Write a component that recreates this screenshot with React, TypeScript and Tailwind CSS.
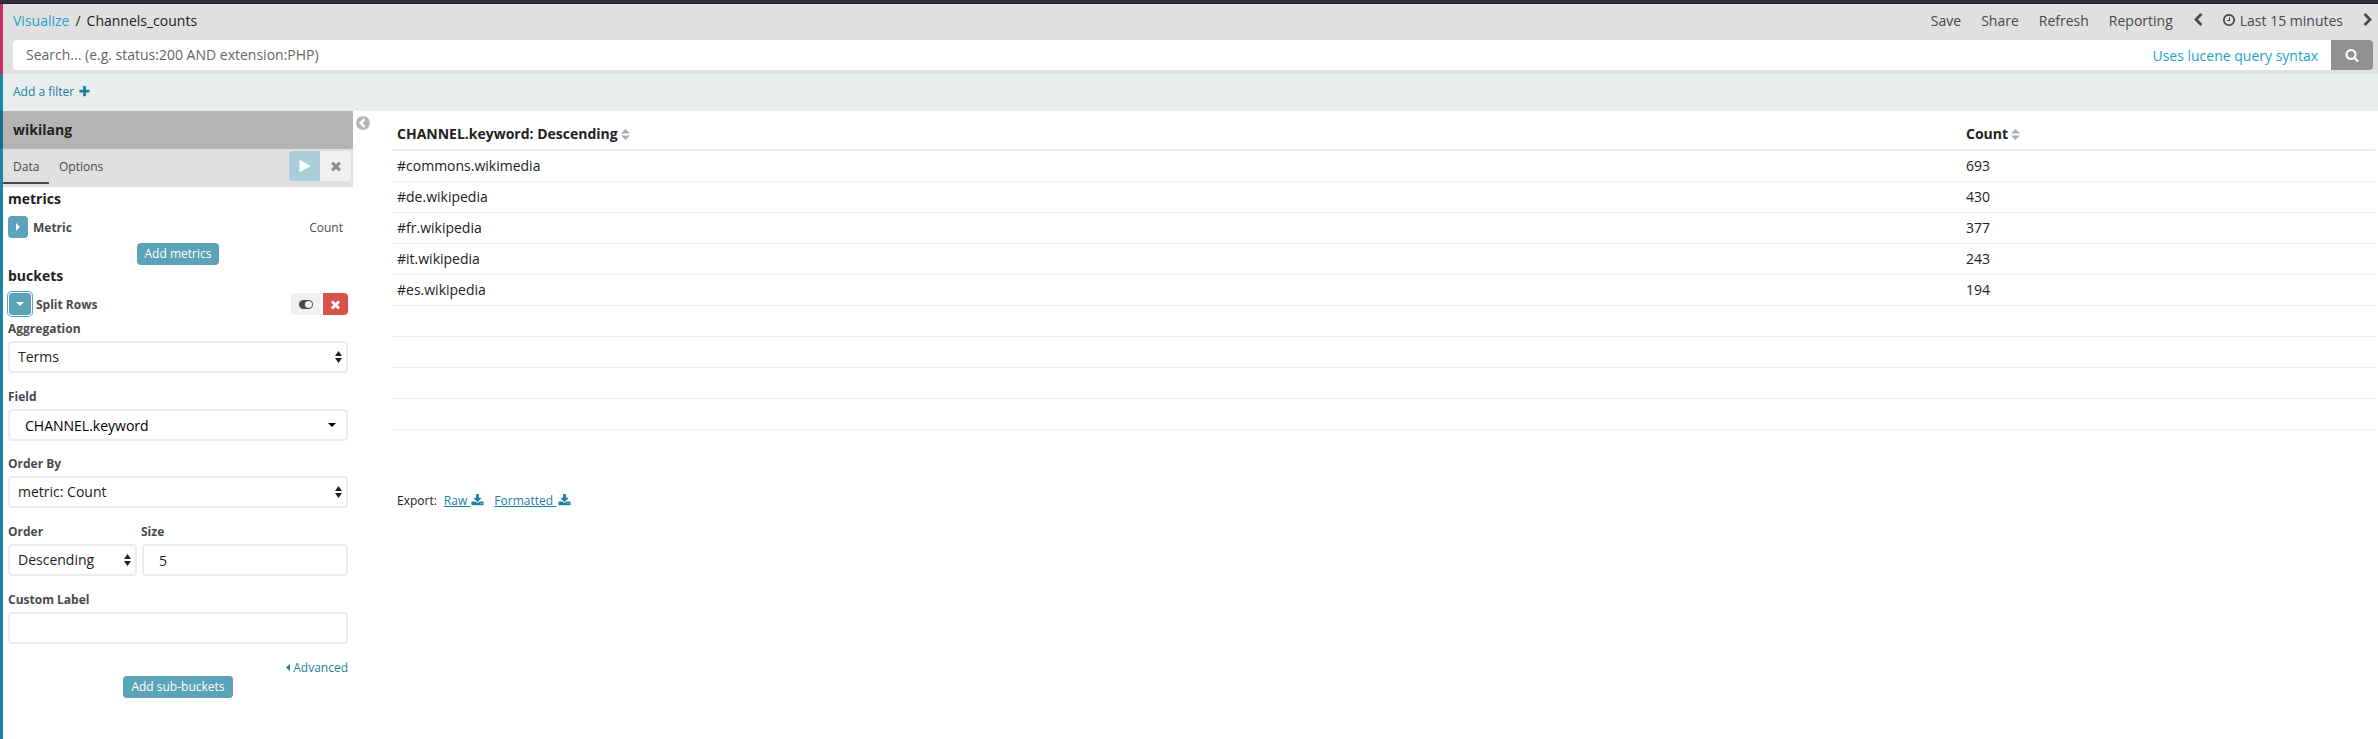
import React from "react";

const FA = {
  plus: "M1600 736v192q0 40-28 68t-68 28h-416v416q0 40-28 68t-68 28h-192q-40 0-68-28t-28-68v-416h-416q-40 0-68-28t-28-68v-192q0-40 28-68t68-28h416v-416q0-40 28-68t68-28h192q40 0 68 28t28 68v416h416q40 0 68 28t28 68z",
  times: "M1490 1322q0 40-28 68l-136 136q-28 28-68 28t-68-28l-294-294-294 294q-28 28-68 28t-68-28l-136-136q-28-28-28-68t28-68l294-294-294-294q-28-28-28-68t28-68l136-136q28-28 68-28t68 28l294 294 294-294q28-28 68-28t68 28l136 136q28 28 28 68t-28 68l-294 294 294 294q28 28 28 68z",
  play: "M1576 927l-1328 738q-23 13-39.5 3t-16.5-36v-1472q0-26 16.5-36t39.5 3l1328 738q23 13 23 31t-23 31z",
  left: "M1427 301l-531 531 531 531q19 19 19 45t-19 45l-166 166q-19 19-45 19t-45-19l-742-742q-19-19-19-45t19-45l742-742q19-19 45-19t45 19l166 166q19 19 19 45t-19 45z",
  right: "M1363 877l-742 742q-19 19-45 19t-45-19l-166-166q-19-19-19-45t19-45l531-531-531-531q-19-19-19-45t19-45l166-166q19-19 45-19t45 19l742 742q19 19 19 45t-19 45z",
  clock: "M1024 544v448q0 14-9 23t-23 9h-320q-14 0-23-9t-9-23v-64q0-14 9-23t23-9h224v-352q0-14 9-23t23-9h64q14 0 23 9t9 23zm416 352q0-148-73-273t-198-198-273-73-273 73-198 198-73 273 73 273 198 198 273 73 273-73 198-198 73-273zm224 0q0 209-103 385.5t-279.5 279.5-385.5 103-385.5-103-279.5-279.5-103-385.5 103-385.5 279.5-279.5 385.5-103 385.5 103 279.5 279.5 103 385.5z",
  search: "M1216 832q0-185-131.5-316.5t-316.5-131.5-316.5 131.5-131.5 316.5 131.5 316.5 316.5 131.5 316.5-131.5 131.5-316.5zm512 832q0 52-38 90t-90 38q-54 0-90-38l-343-342q-179 124-399 124-143 0-273.5-55.5t-225-150-150-225-55.5-273.5 55.5-273.5 150-225 225-150 273.5-55.5 273.5 55.5 225 150 150 225 55.5 273.5q0 220-124 399l343 343q37 37 37 90z",
  download: "M1344 1344q0-26-19-45t-45-19-45 19-19 45 19 45 45 19 45-19 19-45zm256 0q0-26-19-45t-45-19-45 19-19 45 19 45 45 19 45-19 19-45zm128-224v320q0 40-28 68t-68 28h-1472q-40 0-68-28t-28-68v-320q0-40 28-68t68-28h465l135 136q58 56 136 56t136-56l136-136h464q40 0 68 28t28 68zm-325-569q17 41-14 70l-448 448q-18 19-45 19t-45-19l-448-448q-31-29-14-70 17-39 59-39h256v-448q0-26 19-45t45-19h256q26 0 45 19t19 45v448h256q42 0 59 39z",
  circleLeft: "M1037 1395l102-102q19-19 19-45t-19-45l-307-307 307-307q19-19 19-45t-19-45l-102-102q-19-19-45-19t-45 19l-454 454q-19 19-19 45t19 45l454 454q19 19 45 19t45-19zm627-499q0 209-103 385.5t-279.5 279.5-385.5 103-385.5-103-279.5-279.5-103-385.5 103-385.5 279.5-279.5 385.5-103 385.5 103 279.5 279.5 103 385.5z",
};

function Icon({ name, className = "size-3.5" }: { name: keyof typeof FA; className?: string }) {
  return (
    <svg viewBox="0 0 1792 1792" fill="currentColor" className={`shrink-0 overflow-visible ${className}`}>
      <path d={FA[name]} />
    </svg>
  );
}

function UpDown({ className }: { className: string }) {
  return (
    <svg viewBox="0 0 8 12" preserveAspectRatio="none" fill="currentColor" className={`shrink-0 ${className}`}>
      <path d="M4 0L8 5H0zM4 12L0 7H8z" />
    </svg>
  );
}

function Label({ children, className = "" }: { children: React.ReactNode; className?: string }) {
  return <div className={`h-[21px] text-xs leading-[18px] font-bold text-[#4a4a4a] ${className}`}>{children}</div>;
}

function Select({ value, className = "w-[340px]" }: { value: string; className?: string }) {
  return (
    <div className={`flex h-8 items-center justify-between rounded border-2 border-[#e8eeee] pr-1 pl-2 text-sm text-[#222] ${className}`}>
      <span>{value}</span>
      <UpDown className="h-3 w-[7px]" />
    </div>
  );
}

const rows: [string, string][] = [
  ["#commons.wikimedia", "693"],
  ["#de.wikipedia", "430"],
  ["#fr.wikipedia", "377"],
  ["#it.wikipedia", "243"],
  ["#es.wikipedia", "194"],
  ["", ""],
  ["", ""],
  ["", ""],
  ["", ""],
];

function Header() {
  return (
    <header className="flex h-[70px] flex-col bg-[#e0e0e0] pr-[5px] pl-2.5">
      <div className="mb-0.5 flex h-[34px] items-center justify-between text-sm text-[#4a4a4a]">
        <div className="flex text-[#222]">
          <span className="text-[#1ca3cc]">Visualize</span>
          <span className="mx-[6px]">/</span>
          <span>Channels_counts</span>
        </div>
        <div className="-mr-0.5 flex items-center">
          <span className="mr-5">Save</span>
          <span className="mr-5">Share</span>
          <span className="mr-5">Refresh</span>
          <span className="mr-[18px]">Reporting</span>
          <Icon name="left" className="-mt-0.5 mr-[17px] size-3.5" />
          <Icon name="clock" className="-mt-0.5 mr-1 size-3.5" />
          <span className="mr-[18px]">Last 15 minutes</span>
          <Icon name="right" className="-mt-0.5 size-3.5" />
        </div>
      </div>
      <div className="flex h-[30px] overflow-hidden rounded bg-white">
        <div className="flex grow items-center justify-between px-[13px] text-sm">
          <span className="text-[#666]">Search... (e.g. status:200 AND extension:PHP)</span>
          <span className="pt-0.5 text-[#1ca3cc]">Uses lucene query syntax</span>
        </div>
        <div className="flex w-[42px] items-center justify-center bg-[#919191] text-white">
          <Icon name="search" />
        </div>
      </div>
    </header>
  );
}

function Sidebar() {
  return (
    <aside className="w-[350px] shrink-0">
      <div className="flex h-[38px] items-center bg-[#b4b4b4] pl-2.5 text-sm font-bold text-[#222]">wikilang</div>
      <div className="flex h-[38px] justify-between bg-[#e0e0e0] pr-0.5 text-xs text-[#4a4a4a]">
        <div className="flex h-[35px]">
          <div className="flex w-[46px] items-center border-b-2 border-[#4a4a4a] pt-0.5 pl-2.5">Data</div>
          <div className="flex items-center pl-2.5">Options</div>
        </div>
        <div className="mt-0.5 flex h-[30px] overflow-hidden rounded">
          <div className="flex w-[31px] items-center justify-center bg-[#a9ced9] text-white">
            <Icon name="play" />
          </div>
          <div className="flex w-[31px] items-center justify-center bg-[#f0f0f0] text-[#8c8c8c]">
            <Icon name="times" />
          </div>
        </div>
      </div>

      <div className="w-[345px] pl-[5px]">
        <div className="h-[29px] pt-0.5 text-sm leading-5 font-bold text-[#222]">metrics</div>
        <div className="flex h-[22px] items-center">
          <div className="flex h-[22px] w-5 items-center justify-center rounded bg-[#5ba3b9] text-white">
            <svg viewBox="0 0 4 8" fill="currentColor" className="h-2 w-1">
              <path d="M0 0L4 4L0 8z" />
            </svg>
          </div>
          <span className="ml-[5px] grow pt-0.5 text-xs font-bold text-[#4a4a4a]">Metric</span>
          <span className="mr-[5px] pt-0.5 text-xs text-[#4a4a4a]">Count</span>
        </div>
        <div className="mt-[5px] flex justify-center">
          <div className="flex h-[22px] w-[82px] items-center justify-center rounded bg-[#5ba3b9] text-xs text-white">Add metrics</div>
        </div>
        <div className="h-[28px] pt-[1px] text-sm leading-5 font-bold text-[#222]">buckets</div>
        <div className="flex h-[22px] items-center">
          <div className="ml-px flex h-[22px] w-[22px] items-center justify-center rounded-[3px] bg-[#5ba3b9] text-white shadow-[0_0_0_1px_#ffffff,0_0_0_2px_#5ba3b9]">
            <svg viewBox="0 0 8 4" fill="currentColor" className="h-1 w-2">
              <path d="M0 0H8L4 4z" />
            </svg>
          </div>
          <span className="ml-[5px] grow pt-0.5 text-xs font-bold text-[#4a4a4a]">Split Rows</span>
          <div className="flex h-[22px] w-[30px] items-center justify-center rounded-l bg-[#f0f0f0] text-[#4a4a4a]">
            <svg viewBox="0 0 14 9" className="h-[9px] w-3.5">
              <rect x="0" y="0" width="14" height="9" rx="4.5" fill="currentColor" />
              <circle cx="9.5" cy="4.5" r="3.6" fill="#f0f0f0" />
            </svg>
          </div>
          <div className="ml-0.5 flex h-[22px] w-[25px] items-center justify-center rounded-r bg-[#d6524a] text-white">
            <Icon name="times" className="size-[13px]" />
          </div>
        </div>
        <Label className="mt-[5px]">Aggregation</Label>
        <Select value="Terms" />
        <Label className="mt-[15px]">Field</Label>
        <div className="flex h-8 items-center justify-between rounded border-2 border-[#e8eeee] pr-2.5 pl-[15px] text-sm text-black">
          <span className="pt-0.5">CHANNEL.keyword</span>
          <svg viewBox="0 0 8 4" fill="currentColor" className="h-1 w-2">
            <path d="M0 0H8L4 4z" />
          </svg>
        </div>
        <Label className="mt-[14px]">Order By</Label>
        <Select value="metric: Count" />
        <div className="mt-[15px] flex gap-[5px]">
          <div className="w-[129px]">
            <Label>Order</Label>
            <Select value="Descending" className="w-[129px]" />
          </div>
          <div className="grow">
            <Label className="-ml-px">Size</Label>
            <div className="flex h-8 items-center rounded border-2 border-[#e8eeee] pt-0.5 pl-[15px] text-sm text-[#222]">5</div>
          </div>
        </div>
        <Label className="mt-[15px]">Custom Label</Label>
        <div className="h-8 rounded border-2 border-[#e8eeee]" />
        <div className="mt-[15px] flex h-[17px] items-center justify-end gap-[3px] text-xs text-[#1a7fa0]">
          <svg viewBox="0 0 4 7" fill="currentColor" className="h-[7px] w-1">
            <path d="M4 0V7L0 3.5z" />
          </svg>
          <span>Advanced</span>
        </div>
        <div className="flex justify-center">
          <div className="flex h-[22px] w-[110px] items-center justify-center rounded bg-[#5ba3b9] text-xs text-white">Add sub-buckets</div>
        </div>
      </div>
    </aside>
  );
}

function Results() {
  return (
    <section className="flex grow">
      <div className="w-[39px] shrink-0 pt-1 pl-[2px] text-[#b4b4b4]">
        <Icon name="circleLeft" className="size-4" />
      </div>
      <div className="grow pr-[3px] text-sm text-[#222]">
        <div className="flex h-10 items-center border-b-2 border-[#e8eeee] pt-2 pl-[5px] font-bold">
          <div className="flex w-[1569px] items-center gap-[3px]">
            <span>CHANNEL.keyword: Descending</span>
            <UpDown className="h-[11px] w-[9px] text-[#a6afb6]" />
          </div>
          <div className="flex items-center gap-[3px]">
            <span>Count</span>
            <UpDown className="h-[11px] w-[9px] text-[#a6afb6]" />
          </div>
        </div>
        {rows.map(([name, count], i) => (
          <div key={i} className="flex h-[31px] items-center border-b border-[#e8eeee] pl-[5px]">
            <span className="w-[1569px]">{name}</span>
            <span>{count}</span>
          </div>
        ))}
        <div className="mt-[63px] flex items-center pl-[5px] text-xs">
          <span>Export:</span>
          <span className="ml-[7px] flex items-center text-[#1a7fa0]">
            <span className="whitespace-pre underline">Raw </span>
            <Icon name="download" className="-mt-0.5 ml-px size-[13px]" />
          </span>
          <span className="ml-2.5 flex items-center text-[#1a7fa0]">
            <span className="whitespace-pre underline">Formatted </span>
            <Icon name="download" className="-mt-0.5 ml-0.5 size-[13px]" />
          </span>
        </div>
      </div>
    </section>
  );
}

export default function App() {
  return (
    <div className="flex h-[739px] flex-col overflow-hidden bg-white font-['Open_Sans',sans-serif]">
      <div className="h-1 shrink-0 border-b border-[#222] bg-[#2f3037]" />
      <div className="flex grow">
        <div className="flex w-[3px] shrink-0 flex-col bg-[#1a86a8]">
          <div className="h-[70px] bg-[#ca2c6c]" />
          <div className="mt-[37px] h-[38px] bg-[#14708f]" />
        </div>
        <main className="flex grow flex-col">
          <Header />
          <div className="flex h-[37px] items-center gap-[4px] bg-[#e8eeee] pb-0.5 pl-2.5 text-xs text-[#1a7fa0]">
            <span>Add a filter</span>
            <Icon name="plus" className="size-[13px]" />
          </div>
          <div className="flex grow">
            <Sidebar />
            <Results />
          </div>
        </main>
      </div>
    </div>
  );
}
